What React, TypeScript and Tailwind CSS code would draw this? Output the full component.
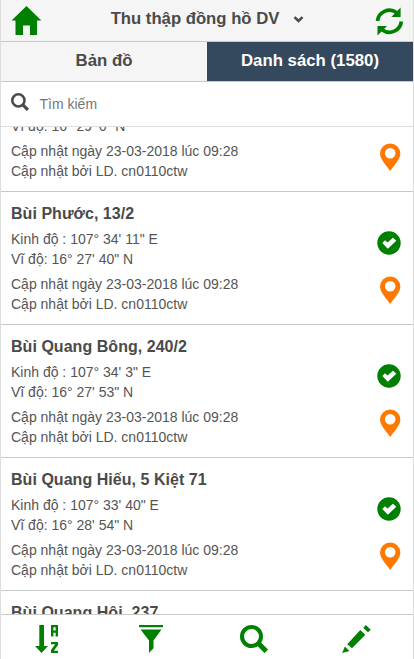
type Meter = { name: string; lng: string; lat: string };

const scrolledLat = `16° 29' 6" N`;

const meters: Meter[] = [
  { name: 'Bùi Phước, 13/2', lng: `107° 34' 11" E`, lat: `16° 27' 40" N` },
  { name: 'Bùi Quang Bông, 240/2', lng: `107° 34' 3" E`, lat: `16° 27' 53" N` },
  { name: 'Bùi Quang Hiếu, 5 Kiệt 71', lng: `107° 33' 40" E`, lat: `16° 28' 54" N` },
];

const HomeIcon = () => (
  <svg className="h-[31px] w-[32px]" viewBox="0 0 32 31" fill="#008000">
    <path d="M16.500 1L31.300 15.500H27V30H20V20.500H13V30H5.500V15.500H1.500Z" />
  </svg>
);

const RefreshIcon = () => (
  <svg className="h-[30px] w-[30px]" viewBox="0 0 30 30" fill="none" stroke="#008000" strokeWidth="3.7">
    <path d="M3.500 15A12 11.600 0 0 1 22.500 6.500M27.300 15.500A12 11.600 0 0 1 8.300 24" />
    <path d="M26.600 1.500V11H17.300ZM3.500 29.500V20H13Z" fill="#008000" stroke="none" />
  </svg>
);

const CheckIcon = () => (
  <svg className="h-6 w-6" viewBox="0 0 24 24">
    <circle cx="12" cy="12" r="11.700" fill="#008000" />
    <path d="M5.300 12L8 9.200L10.500 11.500L16 6.700L19.300 9.800L10.800 17.700Z" fill="#fff" />
  </svg>
);

const PinIcon = () => (
  <svg className="h-7 w-[22px]" viewBox="0 0 22 28">
    <path
      fillRule="evenodd"
      fill="#ff7800"
      d="M11.200 28C9 24.500 1 16.500 1 10.800A10.200 10.300 0 0 1 21.400 10.800C21.400 16.500 13.400 24.500 11.200 28ZM11.200 5A5.300 5.300 0 1 0 11.200 15.600A5.300 5.300 0 1 0 11.200 5Z"
    />
  </svg>
);

const SortIcon = () => (
  <svg className="h-7 w-6" viewBox="0 0 24 28" fill="#008000">
    <path d="M4.300 0H9V21H13L6.500 28L0 21H4.300Z" />
    <path d="M16 0H23V11.500H20.600V7.800H18.400V11.500H16ZM18.400 2.300V5.500H20.600V2.300Z" fillRule="evenodd" />
    <path d="M16 17H23V20L18.900 25.700H23V28H16V25L20.200 19.300H16Z" />
  </svg>
);

const FilterIcon = () => (
  <svg className="h-7 w-6" viewBox="0 0 24 28" fill="#008000">
    <path d="M0 0H24V2.200H0ZM1.500 4.500H22.500L14.500 15.500V23.300L10 28V15.500Z" />
  </svg>
);

const SearchIcon = ({ className }: { className: string }) => (
  <svg className={className} viewBox="0 0 28 28" fill="none" stroke="currentColor">
    <circle cx="11.500" cy="11.500" r="9.500" strokeWidth="4" />
    <path d="M18.200 18.200L26.300 26.300" strokeWidth="5" />
  </svg>
);

const PencilIcon = () => (
  <svg className="h-7 w-[29px]" viewBox="0 0 29 28" fill="#008000">
    <path d="M5.200 19.200L18.300 5L23.300 9.800L10 23.200ZM21.300 3L23.800 0L28.700 4.700L26 7.200ZM2.900 21.500L7.500 26L0.200 28Z" />
  </svg>
);

const UpdateInfo = () => (
  <div className="mt-[5px]">
    <div>Cập nhật ngày 23-03-2018 lúc 09:28</div>
    <div>Cập nhật bởi LD. cn0110ctw</div>
  </div>
);

function MeterRow({ meter }: { meter: Meter }) {
  return (
    <div className="flex h-[133px] shrink-0 justify-between border-b border-[#c8c8c8] pl-[10px] pr-3 text-[14px] leading-5 text-[#555]">
      <div className="whitespace-nowrap pt-[10px]">
        <div className="h-[27px] text-[16px] font-bold leading-[23px] tracking-[0.04px] text-[#4a4a4a]">{meter.name}</div>
        <div>Kinh độ : {meter.lng}</div>
        <div>Vĩ độ: {meter.lat}</div>
        <UpdateInfo />
      </div>
      <div className="flex flex-col items-end pt-[39px]">
        <CheckIcon />
        <div className="mt-[21px]">
          <PinIcon />
        </div>
      </div>
    </div>
  );
}

export default function App() {
  return (
    <div className="flex h-[659px] w-[414px] flex-col overflow-hidden border-x border-[#ddd] bg-white font-['Liberation_Sans',sans-serif] text-[#555]">
      <header className="flex h-[42px] shrink-0 items-center justify-between border-b border-[#c8c8c8] bg-[#f5f5f5] px-[9px]">
        <HomeIcon />
        <div className="mr-px flex items-center text-[16.7px] font-bold leading-5 text-[#4a4a4a]">
          <span className="mb-[4px]">Thu thập đồng hồ DV</span>
          <svg className="mb-[2px] ml-[14px] h-[7px] w-[11px]" viewBox="0 0 11 7" fill="none" stroke="currentColor" strokeWidth="2.500">
            <path d="M1.500 1.200L5.500 5L9.500 1.200" />
          </svg>
        </div>
        <RefreshIcon />
      </header>
      <nav className="grid h-10 shrink-0 grid-cols-2 border-b border-[#c8c8c8] bg-[#f5f5f5] text-center text-[16.8px] font-bold leading-[37px] text-[#4a4a4a]">
        <div>Bản đồ</div>
        <div className="bg-[#34495e] text-white">Danh sách (1580)</div>
      </nav>
      <div className="flex h-[45px] shrink-0 items-center border-b border-[#ddd] pl-[10px]">
        <SearchIcon className="mb-[5px] h-[18px] w-[18px] text-[#4a4a4a]" />
        <span className="ml-[10.5px] text-[14px] leading-5 text-[#777]">Tìm kiếm</span>
      </div>
      <main className="flex min-h-0 flex-1 flex-col overflow-hidden">
        <div className="flex h-[65px] shrink-0 items-end justify-between overflow-hidden border-b border-[#c8c8c8] pb-[10px] pl-[10px] pr-3 text-[14px] leading-5">
          <div className="whitespace-nowrap">
            <div>Vĩ độ: {scrolledLat}</div>
            <UpdateInfo />
          </div>
          <div className="mb-[10px]">
            <PinIcon />
          </div>
        </div>
        {meters.map((m) => (
          <MeterRow key={m.name} meter={m} />
        ))}
        <div className="pl-[10px] pt-[10px] text-[16px] font-bold leading-[23px] tracking-[0.04px] text-[#4a4a4a]">Bùi Quang Hội, 237</div>
      </main>
      <footer className="flex h-[45px] shrink-0 items-start border-t border-[#c8c8c8] bg-white pl-[34px] pt-[10px] text-[#008000]">
        <SortIcon />
        <div className="ml-20">
          <FilterIcon />
        </div>
        <div className="ml-[76.5px]">
          <SearchIcon className="h-7 w-7" />
        </div>
        <div className="ml-[74.5px]">
          <PencilIcon />
        </div>
      </footer>
    </div>
  );
}
